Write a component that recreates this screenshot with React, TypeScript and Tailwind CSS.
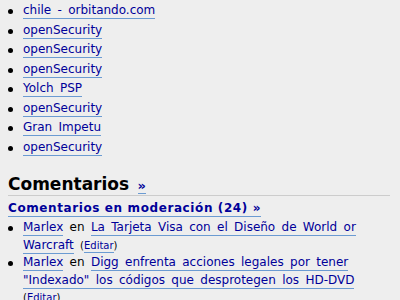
import React from "react";

const blogroll = [
    "chile - orbitando.com",
    "openSecurity",
    "openSecurity",
    "openSecurity",
    "Yolch PSP",
    "openSecurity",
    "Gran Impetu",
    "openSecurity",
];

const comments = [
    { author: "Marlex", post: "La Tarjeta Visa con el Diseño de World or Warcraft" },
    { author: "Marlex", post: "Digg enfrenta acciones legales por tener \"Indexado\" los códigos que desprotegen los HD-DVD" },
];

const linkCls = "text-[#000099] border-b border-[#6b9bd2] pb-[1px] no-underline";

function Bullet({ top }: { top: string }) {
    return (
        <span className={`shrink-0 w-[15px] ${top}`}>
            <span className="block w-[5px] h-[5px] rounded-full bg-black" />
        </span>
    );
}

export default function App() {
    return (
        <div className="w-[400px] h-[300px] overflow-hidden bg-[#eeeeee] font-['DejaVu_Sans',Verdana,sans-serif] text-[12px] text-black [word-spacing:2.5px]">
            <div className="pl-[8px] pr-[10px]">
                {/* blogroll */}
                <ul className="pt-[1px] leading-[19.5px]">
                    {blogroll.map((name, i) => (
                        <li key={i} className="flex">
                            <Bullet top="pt-[8px]" />
                            <span>
                                <a href="#" className={linkCls}>{name}</a>
                            </span>
                        </li>
                    ))}
                </ul>

                {/* comments */}
                <h2 className="mt-[18px] text-[17px] font-bold leading-[19px] border-b border-[#cccccc]">
                    Comentarios{" "}
                    <a href="#" className="text-[13px] text-[#000099] border-b border-[#6b9bd2]">»</a>
                </h2>
                <div className="mt-[3px] leading-[18px] [word-spacing:0px]">
                    <a href="#" className={`${linkCls} font-bold tracking-[0.6px]`}>
                        Comentarios en moderación (24) »
                    </a>
                </div>
                <ul className="mt-[2px] leading-[17.5px]">
                    {comments.map((c, i) => (
                        <li key={i} className="flex">
                            <Bullet top="pt-[7px]" />
                            <span>
                                <a href="#" className={linkCls}>{c.author}</a> en{" "}
                                <a href="#" className={linkCls}>{c.post}</a>{" "}
                                <span className="text-[10px]">
                                    (<a href="#" className={linkCls}>Editar</a>)
                                </span>
                            </span>
                        </li>
                    ))}
                </ul>
            </div>
        </div>
    );
}
